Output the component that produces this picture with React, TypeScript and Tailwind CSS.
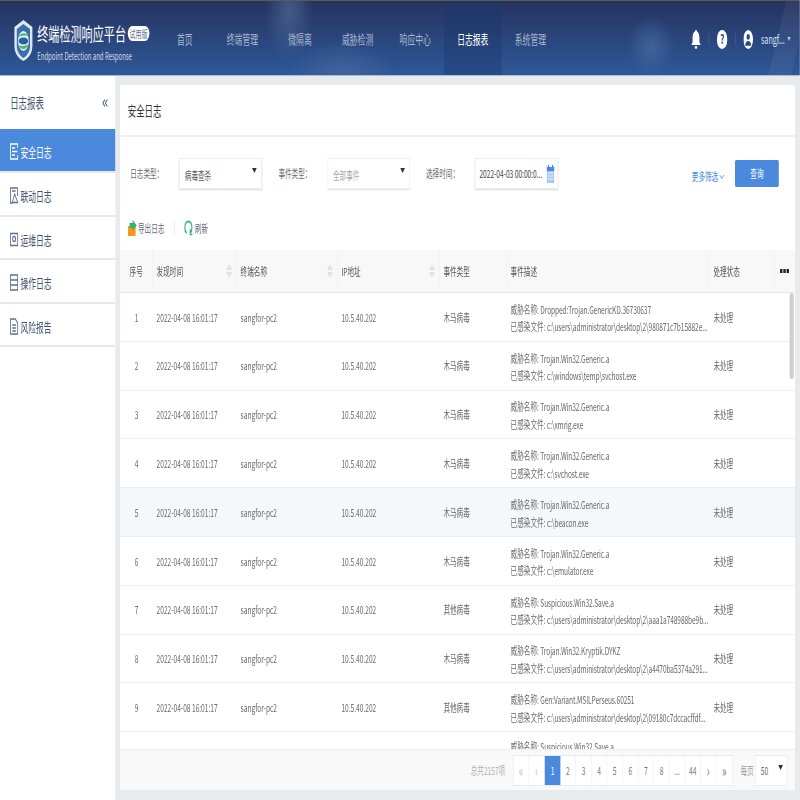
import React from "react";
import { ChevronDown, ChevronsLeft } from "lucide-react";

// the reference is squeezed horizontally, so the page is laid out at 1333px and scaled to 800px
const navItems = ["首页", "终端管理", "微隔离", "威胁检测", "响应中心", "日志报表", "系统管理"];

const sideItems = ["安全日志", "联动日志", "运维日志", "操作日志", "风险报告"];

const pre = "c:\\users\\administrator\\desktop\\2\\";

const rows = [
  { type: "木马病毒", name: "Dropped:Trojan.GenericKD.36730637", file: pre + "980871c7b15882e..." },
  { type: "木马病毒", name: "Trojan.Win32.Generic.a", file: "c:\\windows\\temp\\svchost.exe" },
  { type: "木马病毒", name: "Trojan.Win32.Generic.a", file: "c:\\xmrig.exe" },
  { type: "木马病毒", name: "Trojan.Win32.Generic.a", file: "c:\\svchost.exe" },
  { type: "木马病毒", name: "Trojan.Win32.Generic.a", file: "c:\\beacon.exe" },
  { type: "木马病毒", name: "Trojan.Win32.Generic.a", file: "c:\\emulator.exe" },
  { type: "其他病毒", name: "Suspicious.Win32.Save.a", file: pre + "aaa1a748988be9b..." },
  { type: "木马病毒", name: "Trojan.Win32.Kryptik.DYKZ", file: pre + "a4470ba5374a291..." },
  { type: "其他病毒", name: "Gen:Variant.MSILPerseus.60251", file: pre + "09180c7dccacffdf..." },
];

const pages = ["«", "‹", "1", "2", "3", "4", "5", "6", "7", "8", "...", "44", "›", "»"];

const gridCols = "grid grid-cols-[55px_140px_168px_170px_112px_338px_108px_33px]";

const Caret = () => (
  <svg width="12" height="14" viewBox="0 0 12 14" className="fill-[#dfe2e5] shrink-0">
    <path d="M6 0l5 6H1zM6 14L1 8h10z" />
  </svg>
);

const Triangle = ({ className }: { className: string }) => (
  <svg viewBox="0 0 12 8" preserveAspectRatio="none" className={className}>
    <path d="M0 0h12L6 8z" />
  </svg>
);

const Logo = () => (
  <svg width="32" height="43" viewBox="0 0 32 43" className="shrink-0">
    <path d="M16 1l15 7v19c0 8-8 13-15 15C9 40 1 35 1 27V8z" fill="#dbe9f5" />
    <path d="M16 5L27 10v17c0 6-6 10-11 12C11 37 5 33 5 27V10z" fill="#3c6fa8" />
    <ellipse cx="16" cy="22" rx="9" ry="10" fill="#e6f0f7" />
    <path d="M7 19c2-5 14-7 18-1-5-2-13-2-18 1z" fill="#54b56a" />
    <path d="M7 26c5 6 15 5 18-1-5 2-13 3-18 1z" fill="#54b56a" />
    <ellipse cx="16" cy="22" rx="8" ry="3.5" fill="#2a5fa5" />
  </svg>
);

const SideIcon = ({ i }: { i: number }) => {
  const stroke = i === 0 ? "#ffffff" : "#5d6f8c";
  return (
    <svg width="15" height="17" viewBox="0 0 15 17" fill="none" stroke={stroke} strokeWidth="1.4" className="shrink-0">
      {i === 0 && <path d="M13.500 5V1h-12v15h12v-4M4 5h5M4 8.500h9M4 12h5" />}
      {i === 1 && <path d="M13 9V1H1.500v15H5M8.500 7l-4 8.500h9zM4 4h6" />}
      {i === 2 && (
        <>
          <path d="M1.500 2.500h12v12h-12z" />
          <circle cx="7.500" cy="8" r="2.500" />
        </>
      )}
      {i === 3 && <path d="M1.500 1h12v15h-12zM1.500 6h12M1.500 11h12" />}
      {i === 4 && <path d="M1.500 1h8l4 4v11h-12zM4.500 7h6M4.500 10h6M4.500 13h6" />}
    </svg>
  );
};

const Select = ({ text, muted }: { text: string; muted?: boolean }) => (
  <div className="flex w-[137px] h-[31px] items-center justify-between bg-white border border-[#eceef0] shadow-[0_1px_2px_#d5d8dc] pl-[8px] pr-[7px]">
    <span className={muted ? "text-[11px] text-[#a8a8a8] mt-[3px]" : "text-[11px] text-[#555] mt-[3px]"}>{text}</span>
    <Triangle className="w-[8px] h-[5px] fill-[#333] mb-[6px]" />
  </div>
);

const App = () => {
  return (
    <div className="w-[800px] h-[800px] overflow-hidden bg-[#e8ebee]">
      <div
        className="w-[1333px] h-[800px] origin-top-left scale-x-[0.6] flex flex-col text-[#6b6b6b] text-[11px]"
        style={{ fontFamily: '"Noto Sans CJK SC", "Noto Sans", sans-serif' }}
      >
        <header className="h-[76px] shrink-0 flex items-stretch border-t-[1px] border-t-[#5a5a5a] border-b border-b-[#a9bdd8] bg-[radial-gradient(ellipse_40px_50px_at_482px_10px,#4a6593cc,transparent),radial-gradient(ellipse_40px_30px_at_1085px_46px,#4a6fa5aa,transparent),radial-gradient(ellipse_90px_30px_at_570px_70px,#47689fbb,transparent),linear-gradient(112deg,transparent_1215px,#ffffff0d_1215px,#ffffff0d_1250px,transparent_1250px),linear-gradient(to_bottom,#26335f,#2e5898)]">
          <div className="w-[260px] shrink-0 flex items-center pl-[23px] gap-[7px] pt-[4px]">
            <Logo />
            <div className="flex flex-col leading-none pt-[5px]">
              <div className="flex items-center">
                <span className="w-[150px] text-[18.500px] text-white whitespace-nowrap">终端检测响应平台</span>
                <span className="ml-[1px] w-[36px] h-[15px] flex items-center justify-center shrink-0 rounded-[8px] bg-white text-[10px] text-[#5a6f92] whitespace-nowrap">试用版</span>
              </div>
              <span className="mt-[8px] text-[10px] text-[#cfd9e8] whitespace-nowrap">Endpoint Detection and Response</span>
            </div>
          </div>
          <nav className="flex items-stretch">
            {navItems.map((item) => (
              <div
                key={item}
                className={
                  item === "日志报表"
                    ? "w-[96px] pt-[2px] flex items-center justify-center text-[13px] text-white bg-[#1c386c]/40"
                    : "w-[96px] pt-[2px] flex items-center justify-center text-[13px] text-[#a9b7cf]"
                }
              >
                {item}
              </div>
            ))}
          </nav>
          <div className="ml-auto flex items-center pr-[15px] pt-[2px]">
            <svg width="16" height="19" viewBox="0 0 14 17" preserveAspectRatio="none" className="fill-white">
              <path d="M7 0c1 0 1.500.6 1.500 1.400C11 2.200 12 4.500 12 7v4l2 2.500H0L2 11V7c0-2.500 1-4.800 3.500-5.600C5.500.6 6 0 7 0zM5 14.500h4c0 1.500-1 2.500-2 2.500s-2-1-2-2.500z" />
            </svg>
            <div className="w-px h-[12px] bg-[#4a6794] mx-[13px]" />
            <div className="w-[17px] h-[19px] rounded-full bg-white flex items-center justify-center text-[13px] font-bold text-[#26467c]">?</div>
            <div className="w-px h-[12px] bg-[#4a6794] mx-[13px]" />
            <svg width="16" height="19" viewBox="0 0 16 18" preserveAspectRatio="none">
              <ellipse cx="8" cy="9" rx="8" ry="9" fill="#fff" />
              <circle cx="8" cy="6.500" r="2.800" fill="#2c4a80" />
              <path d="M3 15c0-3 2-4.500 5-4.500s5 1.500 5 4.500z" fill="#2c4a80" />
            </svg>
            <span className="ml-[13px] text-[12px] text-[#dfe6f0]">sangf...</span>
            <Triangle className="ml-[4px] w-[6px] h-[4px] fill-[#b8c4d8]" />
          </div>
        </header>

        <div className="flex-1 flex min-h-0">
          <aside className="w-[192px] shrink-0 bg-white flex flex-col">
            <div className="h-[53px] flex items-center justify-between pl-[17px] pr-[10px]">
              <span className="text-[14px] text-[#44546f]">日志报表</span>
              <ChevronsLeft size={14} strokeWidth={2.5} className="text-[#46648f]" />
            </div>
            {sideItems.map((item, i) => (
              <div
                key={item}
                className={
                  i === 0
                    ? "h-[44px] pt-[3px] flex items-center gap-[3px] pl-[16px] bg-[#4a89dc] text-white text-[13px] border-b-2 border-[#e6e8ea]"
                    : "h-[43.500px] pt-[4px] flex items-center gap-[3px] pl-[16px] border-b-2 border-[#e6e8ea] bg-white text-[#44546f] text-[13px]"
                }
              >
                <SideIcon i={i} />
                {item}
              </div>
            ))}
          </aside>

          <main className="flex-1 min-w-0 pl-[8px] pt-[9px] pr-[8px] pb-[10px]">
            <div className="h-full w-[1125px] bg-white rounded-[2px] flex flex-col relative">
              <div className="h-[52px] shrink-0 flex items-center pl-[13px] border-b-2 border-[#f0f1f2] text-[14px] text-[#333]">
                安全日志
              </div>

              <div className="flex items-center pl-[17px] pr-[27px] mt-[21px]">
                <span className="w-[82px]">日志类型：</span>
                <Select text="病毒查杀" />
                <span className="ml-[28px] w-[82px]">事件类型：</span>
                <Select text="全部事件" muted />
                <span className="ml-[27px] w-[82px]">选择时间：</span>
                <div className="flex w-[138px] h-[31px] items-center justify-between bg-white border border-[#eceef0] shadow-[0_1px_2px_#d5d8dc] pl-[6px] pr-[5px]">
                  <span className="text-[11px] text-[#444] whitespace-nowrap">2022-04-03 00:00:0...</span>
                  <svg width="13" height="18" viewBox="0 0 13 18" className="shrink-0">
                    <path d="M0 2h13v16H0z" fill="#a9c9ee" />
                    <path d="M0 2h13v4H0zM2 0h2v3H2zM9 0h2v3H9z" fill="#4a89dc" />
                    <path d="M2 8h9M2 11h9M2 14h9" stroke="#fff" strokeWidth="1" />
                  </svg>
                </div>
                <span className="ml-auto text-[#4a89dc] whitespace-nowrap flex items-center mt-[6px]">
                  更多筛选
                  <ChevronDown size={12} />
                </span>
                <button className="ml-[16px] w-[73px] h-[27px] bg-[#4a89dc] rounded-[2px] text-white text-[11px]">查询</button>
              </div>

              <div className="flex items-center pl-[13px] mt-[29px] h-[20px]">
                <svg width="16" height="16" viewBox="0 0 16 16">
                  <path d="M0 6h13v10H0z" fill="#f5981d" />
                  <path d="M8 0l7 5.500-7 5.500V8H3V3h5z" fill="#2fb37a" />
                </svg>
                <span className="ml-[1px] text-[#667]">导出日志</span>
                <div className="w-px h-[14px] bg-[#e4e6e8] mx-[16px]" />
                <svg width="14" height="16" viewBox="0 0 14 16" fill="none" stroke="#2fb37a" strokeWidth="2" className="shrink-0">
                  <path d="M4 13C2 12 1 10 1 7.500 1 4 3.500 1.500 7 1.500s6 2.500 6 6c0 2.500-1 4.500-3 5.500" />
                  <path d="M10 9v5.500H14" strokeWidth="1.600" />
                </svg>
                <span className="ml-[4px] text-[#667]">刷新</span>
              </div>

              <div className={gridCols + " h-[43px] mt-[12px] shrink-0 bg-[#f8f8f8] border-b border-[#e8e8e8] text-[#555]"}>
                <div className="flex items-center justify-center border-r border-[#f0f0f0]">序号</div>
                <div className="flex items-center justify-between px-[6px] border-r border-[#f0f0f0]">发现时间<Caret /></div>
                <div className="flex items-center justify-between px-[6px] border-r border-[#f0f0f0]">终端名称<Caret /></div>
                <div className="flex items-center justify-between px-[6px] border-r border-[#f0f0f0]">IP地址<Caret /></div>
                <div className="flex items-center px-[6px] border-r border-[#f0f0f0]">事件类型</div>
                <div className="flex items-center px-[6px] border-r border-[#f0f0f0]">事件描述</div>
                <div className="flex items-center px-[6px] border-r border-[#f0f0f0]">处理状态</div>
                <div className="flex items-center justify-center">
                  <svg width="15" height="4" viewBox="0 0 15 4" className="fill-[#222]">
                    <path d="M0 0h4v4H0zM5.500 0h4v4h-4zM11 0h4v4h-4z" />
                  </svg>
                </div>
              </div>

              <div className="flex-1 min-h-0 overflow-hidden">
                {rows.map((row, i) => (
                  <div
                    key={i}
                    className={
                      i === 4
                        ? gridCols + " h-[48.800px] border-b border-[#eceef0] bg-[#f5f8fb]"
                        : gridCols + " h-[48.800px] border-b border-[#eceef0]"
                    }
                  >
                    <div className="flex items-center justify-center">{i + 1}</div>
                    <div className="flex items-center px-[6px] whitespace-nowrap">2022-04-08 16:01:17</div>
                    <div className="flex items-center px-[6px]">sangfor-pc2</div>
                    <div className="flex items-center px-[6px]">10.5.40.202</div>
                    <div className="flex items-center px-[6px]">{row.type}</div>
                    <div className="flex flex-col justify-center pt-[3px] px-[6px] leading-[17.500px] whitespace-nowrap overflow-hidden">
                      <span>威胁名称: <span className="tracking-[-0.16px]">{row.name}</span></span>
                      <span>已感染文件: <span className="tracking-[-0.16px]">{row.file}</span></span>
                    </div>
                    <div className="flex items-center px-[6px]">未处理</div>
                    <div />
                  </div>
                ))}
                <div className={gridCols + " h-[48.800px]"}>
                  <div className="col-start-6 pt-[6px] px-[6px] leading-[17.500px] whitespace-nowrap">
                    威胁名称: <span className="tracking-[-0.16px]">Suspicious.Win32.Save.a</span>
                  </div>
                </div>
              </div>

              <div className="absolute right-[2px] top-[208px] w-[7px] h-[86px] rounded-full bg-[#cfcfcf]" />

              <div className="h-[41px] shrink-0 bg-[#f9f9f9] border-t border-[#eceef0] flex items-center justify-end pr-[13px]">
                <span className="text-[#b0b0b0] whitespace-nowrap">总共2157项</span>
                <div className="ml-[13px] flex h-[31px] border border-[#e8eaec] bg-white">
                  {pages.map((p, i) => (
                    <div
                      key={i}
                      className={
                        p === "1"
                          ? "w-[26px] flex items-center justify-center bg-[#4a89dc] text-white"
                          : i < 2
                            ? "w-[26px] flex items-center justify-center border-r border-[#eceef0] text-[#c4c4c4] text-[16px]"
                            : i === 13
                              ? "w-[26px] flex items-center justify-center text-[#777] text-[16px]"
                              : i === 12
                                ? "w-[26px] flex items-center justify-center border-r border-[#eceef0] text-[#777] text-[16px]"
                                : "w-[26px] flex items-center justify-center border-r border-[#eceef0] text-[#777]"
                      }
                    >
                      {p}
                    </div>
                  ))}
                </div>
                <span className="ml-[13px] text-[#999] whitespace-nowrap">每页</span>
                <div className="ml-[3px] w-[53px] h-[31px] flex items-center justify-between bg-white border border-[#e8eaec] pl-[8px] pr-[6px]">
                  <span>50</span>
                  <Triangle className="fill-[#333] mb-[6px] w-[8px] h-[5px]" />
                </div>
              </div>
            </div>
          </main>
        </div>
      </div>
    </div>
  );
};

export default App;
